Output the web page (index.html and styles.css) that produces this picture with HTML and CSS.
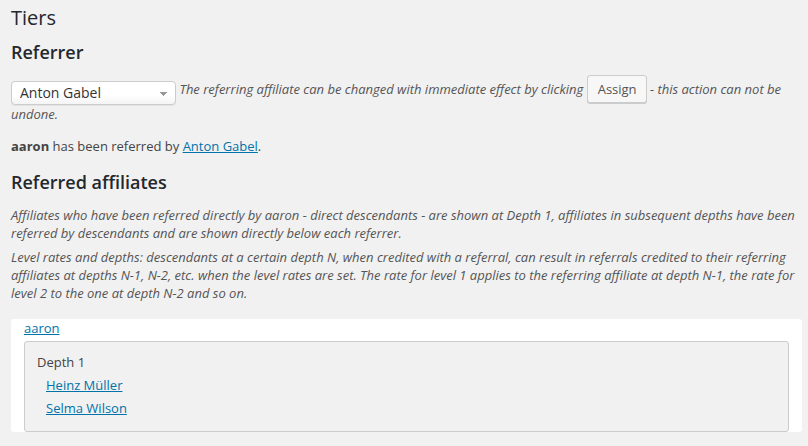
FILE: index.html
```html
<!DOCTYPE html>
<html lang="en">
<head>
    <meta charset="UTF-8">
    <meta name="viewport" content="width=device-width, initial-scale=1.0">
    <title>Tiers</title>
    <link rel="stylesheet" href="styles.css">
</head>
<body>
    <div class="wrap">
        <h2 class="page-title">Tiers</h2>

        <h3 class="section-title">Referrer</h3>
        <p class="referrer-row">
            <select class="referrer-select">
                <option>Anton Gabel</option>
            </select>
            <em>The referring affiliate can be changed with immediate effect by clicking</em>
            <button class="button" type="button">Assign</button>
            <em>- this action can not be undone.</em>
        </p>
        <p class="referred-by"><strong>aaron</strong> has been referred by <a href="#">Anton Gabel</a>.</p>

        <h3 class="section-title section-title--second">Referred affiliates</h3>
        <p class="description">Affiliates who have been referred directly by aaron - direct descendants - are shown at Depth 1, affiliates in subsequent depths have been referred by descendants and are shown directly below each referrer.</p>
        <p class="description">Level rates and depths: descendants at a certain depth N, when credited with a referral, can result in referrals credited to their referring affiliates at depths N-1, N-2, etc. when the level rates are set. The rate for level 1 applies to the referring affiliate at depth N-1, the rate for level 2 to the one at depth N-2 and so on.</p>

        <div class="tree">
            <a href="#" class="tree-root">aaron</a>
            <div class="depth">
                <div class="depth-label">Depth 1</div>
                <ul class="depth-list">
                    <li><a href="#">Heinz Müller</a></li>
                    <li><a href="#">Selma Wilson</a></li>
                </ul>
            </div>
        </div>
    </div>
</body>
</html>
```

FILE: styles.css
```css
body {
    margin: 0;
    background-color: #f1f1f1;
    font-family: "Open Sans", "Liberation Sans", sans-serif;
    font-size: 13px;
    line-height: 18px;
    color: #444;
}
.wrap {
    padding: 0 6px 0 11px;
}
a {
    color: #0073aa;
}
.page-title {
    margin: 0;
    padding-top: 3px;
    font-size: 20px;
    font-weight: 400;
    line-height: 29px;
    color: #23282d;
}
.section-title {
    margin: 8px 0 0;
    font-size: 18px;
    font-weight: 600;
    line-height: 24px;
    color: #23282d;
}
.section-title--second {
    margin-top: 15px;
}
.referrer-row {
    margin: 12px 0 0;
    line-height: 24px;
    color: #555;
}
.referrer-select {
    -webkit-appearance: none;
    appearance: none;
    width: 165px;
    height: 24px;
    margin: 0 0 -4px;
    padding: 0 24px 0 8px;
    border: 1px solid #ccc;
    border-radius: 4px;
    background-color: #fff;
    background-image:
        linear-gradient(45deg, transparent 50%, #999 50%),
        linear-gradient(135deg, #999 50%, transparent 50%),
        linear-gradient(#fff 60%, #f4f4f4);
    background-position: 148px 10px, 152px 10px, 0 0;
    background-size: 4px 4px, 4px 4px, 100% 100%;
    background-repeat: no-repeat;
    box-shadow: 0 1px 1px rgba(0, 0, 0, 0.06);
    font-family: inherit;
    font-size: 14px;
    line-height: 20px;
    color: #333;
    vertical-align: -4px;
}
.button {
    height: 28px;
    margin: -1px 0;
    padding: 0 9px 1px 10px;
    border: 1px solid #ccc;
    border-radius: 3px;
    background: #f7f7f7;
    box-shadow: 0 1px 0 #ccc;
    font-family: inherit;
    font-size: 13px;
    color: #555;
    vertical-align: baseline;
}
.referred-by {
    margin: 11px 0 0;
}
.description {
    margin: 12px 0 0;
    font-style: italic;
    color: #555;
}
.description + .description {
    margin-top: 6px;
}
.tree {
    margin-top: 17px;
    padding: 0 13px;
    background: #fff;
    border-radius: 3px;
}
.tree-root {
    display: block;
}
.depth {
    margin-top: 4px;
    padding: 11px 12px 14px;
    border: 1px solid #ccc;
    border-radius: 3px;
    background: #f1f1f1;
}
.depth-list {
    list-style: none;
    margin: 5px 0 0;
    padding: 0 0 0 9px;
}
.depth-list li + li {
    margin-top: 5px;
}
```
